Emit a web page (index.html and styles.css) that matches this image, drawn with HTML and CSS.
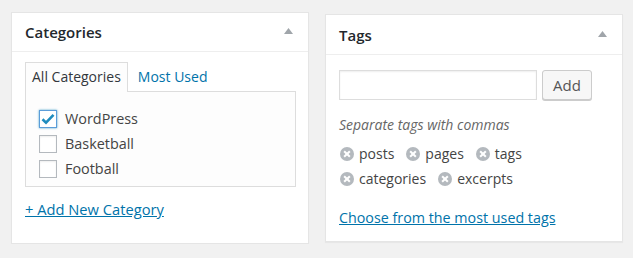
FILE: index.html
```html
<!DOCTYPE html>
<html lang="en">
<head>
  <meta charset="UTF-8" />
  <title>Categories and Tags</title>
  <link rel="stylesheet" href="styles.css">
</head>
<body>

  <div class="boxes">

    <div class="postbox categories">
      <div class="hndle">
        <h2>Categories</h2>
        <svg class="toggle" width="9" height="6" viewBox="0 0 9 6"><polygon points="4.5,0 9,6 0,6" fill="#a0a5aa"/></svg>
      </div>
      <div class="inside">
        <ul class="tabs">
          <li class="tab active">All Categories</li>
          <li class="tab"><a href="#">Most Used</a></li>
        </ul>
        <div class="tab-panel">
          <label class="cat"><span class="check checked">
            <svg width="14" height="12" viewBox="0 0 14 12"><path d="M1.5 6.2 L5 9.6 L12.5 1.8" fill="none" stroke="#1e8cbe" stroke-width="2.6"/></svg>
          </span>WordPress</label>
          <label class="cat"><span class="check"></span>Basketball</label>
          <label class="cat"><span class="check"></span>Football</label>
        </div>
        <a class="add-new" href="#">+ Add New Category</a>
      </div>
    </div>

    <div class="postbox tags">
      <div class="hndle">
        <h2>Tags</h2>
        <svg class="toggle" width="9" height="6" viewBox="0 0 9 6"><polygon points="4.5,0 9,6 0,6" fill="#a0a5aa"/></svg>
      </div>
      <div class="inside">
        <div class="ajaxtag">
          <input type="text" class="newtag">
          <button class="button">Add</button>
        </div>
        <p class="howto">Separate tags with commas</p>
        <div class="tagchecklist">
          <span class="tag"><span class="remove"></span>posts</span>
          <span class="tag"><span class="remove"></span>pages</span>
          <span class="tag"><span class="remove"></span>tags</span>
          <span class="tag"><span class="remove"></span>categories</span>
          <span class="tag"><span class="remove"></span>excerpts</span>
        </div>
        <a class="tagcloud-link" href="#">Choose from the most used tags</a>
      </div>
    </div>

  </div>

</body>
</html>
```

FILE: styles.css
```css
body {
  margin: 0;
  background-color: #f1f1f1;
  font-family: 'Open Sans', 'Noto Sans', sans-serif;
  font-size: 14px;
  color: #444;
}

a {
  color: #0073aa;
}

.boxes {
  display: flex;
  align-items: flex-start;
  gap: 16px;
  padding: 12px 0 0 11px;
}

.postbox {
  width: 296px;
  background-color: #fff;
  border: 1px solid #e5e5e5;
  box-shadow: 0 1px 1px rgba(0, 0, 0, 0.04);
}

.postbox.tags {
  margin-top: 2px;
}

.hndle {
  display: flex;
  align-items: center;
  justify-content: space-between;
  height: 38px;
  padding: 0 15px 0 13px;
  border-bottom: 1px solid #eee;
}

.tags .hndle {
  height: 39px;
}

.hndle h2 {
  margin: 0;
  font-size: 15px;
  font-weight: 600;
  color: #23282d;
}

.toggle {
  margin-top: -2px;
}

.inside {
  padding: 10px 12px 24px 13px;
}

.tags .inside {
  padding: 15px 12px 14px 13px;
}

/* category tabs */

.tabs {
  display: flex;
  list-style: none;
  margin: 0;
  padding: 0;
}

.tab {
  height: 28px;
  line-height: 27px;
  padding: 0 6px;
  border: 1px solid transparent;
  border-bottom: none;
}

.tab.active {
  border-color: #ddd;
  background-color: #fdfdfd;
  color: #32373c;
  margin-bottom: -1px;
  position: relative;
  height: 29px;
}

.tab a {
  text-decoration: none;
  padding-left: 3px;
}

.tab-panel {
  border: 1px solid #ddd;
  background-color: #fdfdfd;
  padding: 14px 13px 0 13px;
  box-sizing: border-box;
  height: 96px;
}

.cat {
  display: flex;
  align-items: center;
  gap: 8px;
  height: 25px;
  font-size: 14.4px;
  color: #444;
}

.check {
  display: flex;
  align-items: center;
  justify-content: center;
  width: 16px;
  height: 16px;
  border: 1px solid #b4b9be;
  background-color: #fff;
  box-shadow: inset 0 1px 2px rgba(0, 0, 0, 0.07);
}

.check.checked {
  border-color: #5b9dd9;
  box-shadow: 0 0 2px rgba(30, 140, 190, 0.8);
}

.add-new {
  display: inline-block;
  margin-top: 12px;
  font-size: 14.7px;
}

/* tags */

.ajaxtag {
  display: flex;
  gap: 5px;
}

.newtag {
  width: 198px;
  height: 30px;
  box-sizing: border-box;
  margin: 0;
  border: 1px solid #ddd;
  box-shadow: inset 0 1px 2px rgba(0, 0, 0, 0.07);
}

.button {
  width: 50px;
  height: 30px;
  margin: 0;
  padding: 0;
  font-family: inherit;
  font-size: 15px;
  color: #555;
  background-color: #f7f7f7;
  border: 1px solid #ccc;
  border-radius: 3px;
  box-shadow: 0 1px 0 #ccc;
}

.howto {
  margin: 15px 0 7px;
  font-style: italic;
  color: #666;
}

.tagchecklist {
  display: flex;
  flex-wrap: wrap;
  column-gap: 11px;
  width: 200px;
}

.tag {
  display: flex;
  align-items: center;
  gap: 5px;
  height: 25px;
}

.remove {
  position: relative;
  width: 14px;
  height: 14px;
  margin-left: 1px;
  border-radius: 50%;
  background-color: #b4b9be;
}

.remove::before,
.remove::after {
  content: "";
  position: absolute;
  left: 3px;
  top: 6px;
  width: 8px;
  height: 2px;
  background-color: #fff;
  transform: rotate(45deg);
}

.remove::after {
  transform: rotate(-45deg);
}

.tagcloud-link {
  display: inline-block;
  margin-top: 17px;
  font-size: 14.3px;
}
```
